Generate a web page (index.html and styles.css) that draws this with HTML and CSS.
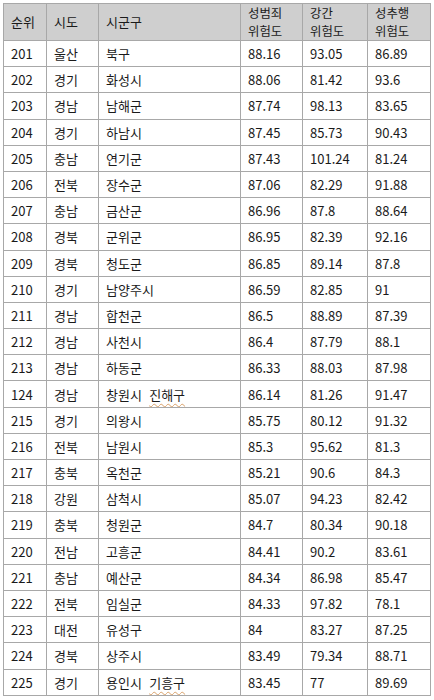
FILE: index.html
```html
<!DOCTYPE html>
<html lang="ko">
<head>
<meta charset="utf-8">
<link rel="stylesheet" href="styles.css">
</head>
<body>
<table class="risk">
<colgroup>
<col class="c1"><col class="c2"><col class="c3"><col class="c4"><col class="c5"><col class="c6">
</colgroup>
<thead>
<tr><th>순위</th><th>시도</th><th>시군구</th><th><span class="ln">성범죄</span><span class="ln">위험도</span></th><th><span class="ln">강간</span><span class="ln">위험도</span></th><th><span class="ln">성추행</span><span class="ln">위험도</span></th></tr>
</thead>
<tbody>
<tr><td>201</td><td>울산</td><td>북구</td><td>88.16</td><td>93.05</td><td>86.89</td></tr>
<tr><td>202</td><td>경기</td><td>화성시</td><td>88.06</td><td>81.42</td><td>93.6</td></tr>
<tr><td>203</td><td>경남</td><td>남해군</td><td>87.74</td><td>98.13</td><td>83.65</td></tr>
<tr><td>204</td><td>경기</td><td>하남시</td><td>87.45</td><td>85.73</td><td>90.43</td></tr>
<tr><td>205</td><td>충남</td><td>연기군</td><td>87.43</td><td>101.24</td><td>81.24</td></tr>
<tr><td>206</td><td>전북</td><td>장수군</td><td>87.06</td><td>82.29</td><td>91.88</td></tr>
<tr><td>207</td><td>충남</td><td>금산군</td><td>86.96</td><td>87.8</td><td>88.64</td></tr>
<tr><td>208</td><td>경북</td><td>군위군</td><td>86.95</td><td>82.39</td><td>92.16</td></tr>
<tr><td>209</td><td>경북</td><td>청도군</td><td>86.85</td><td>89.14</td><td>87.8</td></tr>
<tr><td>210</td><td>경기</td><td>남양주시</td><td>86.59</td><td>82.85</td><td>91</td></tr>
<tr><td>211</td><td>경남</td><td>합천군</td><td>86.5</td><td>88.89</td><td>87.39</td></tr>
<tr><td>212</td><td>경남</td><td>사천시</td><td>86.4</td><td>87.79</td><td>88.1</td></tr>
<tr><td>213</td><td>경남</td><td>하동군</td><td>86.33</td><td>88.03</td><td>87.98</td></tr>
<tr><td>124</td><td>경남</td><td>창원시&nbsp; <span class="spell">진해구</span></td><td>86.14</td><td>81.26</td><td>91.47</td></tr>
<tr><td>215</td><td>경기</td><td>의왕시</td><td>85.75</td><td>80.12</td><td>91.32</td></tr>
<tr><td>216</td><td>전북</td><td>남원시</td><td>85.3</td><td>95.62</td><td>81.3</td></tr>
<tr><td>217</td><td>충북</td><td>옥천군</td><td>85.21</td><td>90.6</td><td>84.3</td></tr>
<tr><td>218</td><td>강원</td><td>삼척시</td><td>85.07</td><td>94.23</td><td>82.42</td></tr>
<tr><td>219</td><td>충북</td><td>청원군</td><td>84.7</td><td>80.34</td><td>90.18</td></tr>
<tr><td>220</td><td>전남</td><td>고흥군</td><td>84.41</td><td>90.2</td><td>83.61</td></tr>
<tr><td>221</td><td>충남</td><td>예산군</td><td>84.34</td><td>86.98</td><td>85.47</td></tr>
<tr><td>222</td><td>전북</td><td>임실군</td><td>84.33</td><td>97.82</td><td>78.1</td></tr>
<tr><td>223</td><td>대전</td><td>유성구</td><td>84</td><td>83.27</td><td>87.25</td></tr>
<tr><td>224</td><td>경북</td><td>상주시</td><td>83.49</td><td>79.34</td><td>88.71</td></tr>
<tr><td>225</td><td>경기</td><td>용인시&nbsp; <span class="spell">기흥구</span></td><td>83.45</td><td>77</td><td>89.69</td></tr>
</tbody>
</table>
</body>
</html>
```
FILE: styles.css
```css
html, body {
  margin: 0;
  background: #ffffff;
}
body {
  padding: 3px 0 0 3px;
  font-family: "Noto Sans CJK KR", "Noto Sans", sans-serif;
  font-size: 13px;
  color: #1a1a1a;
}
.risk {
  border-collapse: collapse;
  table-layout: fixed;
  width: 427px;
}
.c1 { width: 43px; }
.c2 { width: 52px; }
.c3 { width: 142px; }
.c4 { width: 62px; }
.c5 { width: 65px; }
.c6 { width: 63px; }
.risk th,
.risk td {
  border: 1px solid #a8a8a8;
  text-align: left;
  vertical-align: middle;
  padding: 0 0 0 7px;
  white-space: nowrap;
  overflow: hidden;
}
.risk th {
  background: #cfcfcf;
  font-weight: normal;
  line-height: 18px;
  height: 35px;
}
.ln {
  display: block;
  font-size: 12.4px;
  height: 18px;
  line-height: 18px;
}
.risk td {
  height: 25.2px;
  line-height: 17px;
}
.spell {
  text-decoration: underline wavy #d9a26a;
  text-decoration-thickness: 1px;
  text-underline-offset: 3px;
}
```
